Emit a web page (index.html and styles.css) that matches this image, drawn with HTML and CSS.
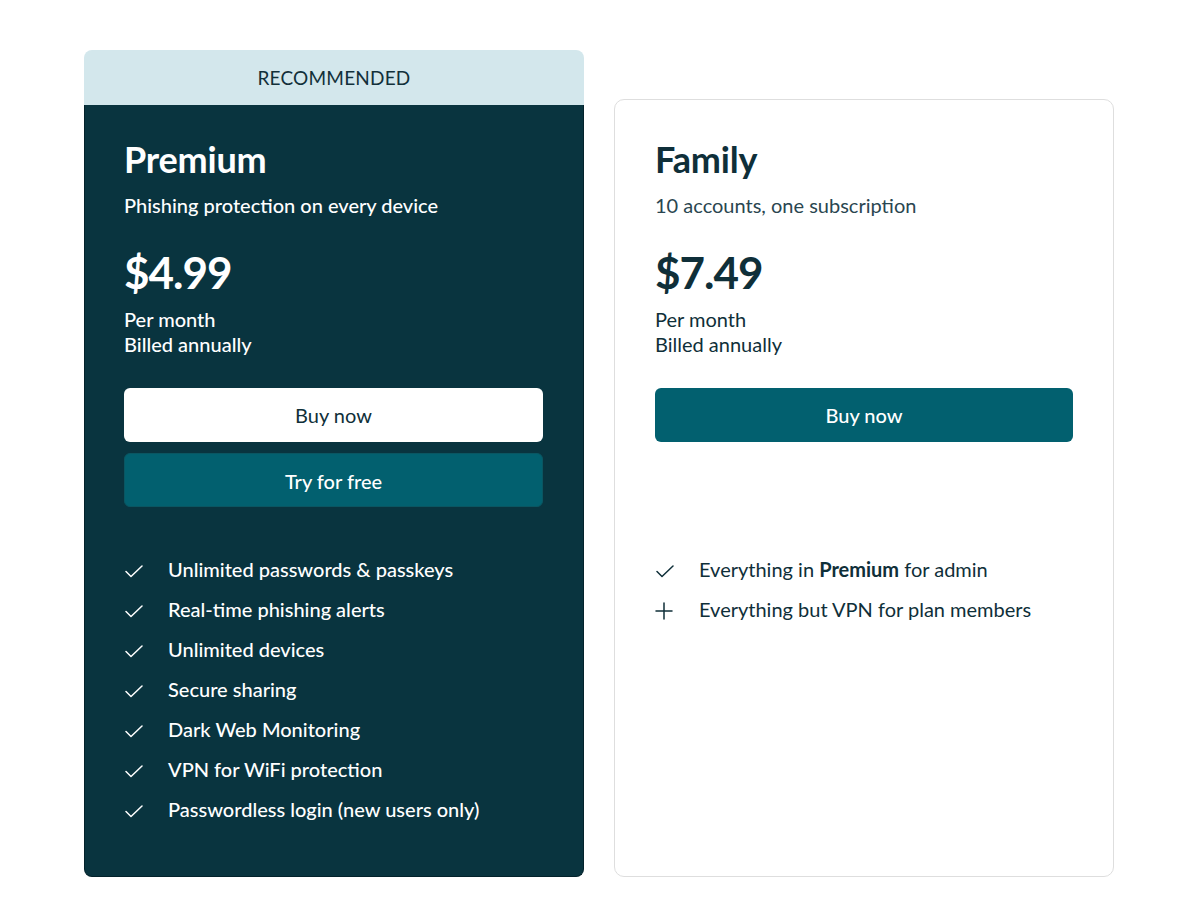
FILE: index.html
```html
<!DOCTYPE html>
<html>
<head>
    <meta charset="utf-8">
    <title>Plans</title>
    <link rel="stylesheet" href="styles.css">
</head>
<body>
<div id="plans">
    <div class="plan featured">
        <div class="ribbon">RECOMMENDED</div>
        <div class="plan-body">
            <h2 class="name">Premium</h2>
            <p class="tagline">Phishing protection on every device</p>
            <div class="price">$4.99</div>
            <p class="billing">Per month<br>Billed annually</p>
            <div class="actions">
                <a href="#" class="btn btn-light">Buy now</a>
                <a href="#" class="btn btn-teal">Try for free</a>
            </div>
            <ul class="features">
                <li><svg class="icon" viewBox="0 0 18 13"><polyline points="1,6.5 6,11.5 17,1"/></svg><span>Unlimited passwords &amp; passkeys</span></li>
                <li><svg class="icon" viewBox="0 0 18 13"><polyline points="1,6.5 6,11.5 17,1"/></svg><span>Real-time phishing alerts</span></li>
                <li><svg class="icon" viewBox="0 0 18 13"><polyline points="1,6.5 6,11.5 17,1"/></svg><span>Unlimited devices</span></li>
                <li><svg class="icon" viewBox="0 0 18 13"><polyline points="1,6.5 6,11.5 17,1"/></svg><span>Secure sharing</span></li>
                <li><svg class="icon" viewBox="0 0 18 13"><polyline points="1,6.5 6,11.5 17,1"/></svg><span>Dark Web Monitoring</span></li>
                <li><svg class="icon" viewBox="0 0 18 13"><polyline points="1,6.5 6,11.5 17,1"/></svg><span>VPN for WiFi protection</span></li>
                <li><svg class="icon" viewBox="0 0 18 13"><polyline points="1,6.5 6,11.5 17,1"/></svg><span>Passwordless login (new users only)</span></li>
            </ul>
        </div>
    </div>

    <div class="plan plain">
        <h2 class="name">Family</h2>
        <p class="tagline">10 accounts, one subscription</p>
        <div class="price">$7.49</div>
        <p class="billing">Per month<br>Billed annually</p>
        <div class="actions">
            <a href="#" class="btn btn-teal">Buy now</a>
        </div>
        <ul class="features">
            <li><svg class="icon" viewBox="0 0 18 13"><polyline points="1,6.5 6,11.5 17,1"/></svg><span>Everything in <b>Premium</b> for admin</span></li>
            <li><svg class="icon plus" viewBox="0 0 18 18"><path d="M9 1v16M1 9h16"/></svg><span>Everything but VPN for plan members</span></li>
        </ul>
    </div>
</div>
</body>
</html>
```

FILE: styles.css
```css
* {
    margin: 0;
    padding: 0;
    box-sizing: border-box;
}

body {
    background: #fff;
    font-family: Lato, "Open Sans", Arial, sans-serif;
    color: #0f2f39;
}

ul {
    list-style: none;
}

a {
    text-decoration: none;
}

div#plans {
    display: flex;
    gap: 30px;
    padding: 50px 0 0 84px;
}

div.plan {
    width: 500px;
}

/* recommended plan */

div.featured {
    display: flex;
    flex-direction: column;
}

div.ribbon {
    height: 55px;
    line-height: 55px;
    text-align: center;
    font-size: 19px;
    letter-spacing: 0.2px;
    color: #12303a;
    background: #d3e7ec;
    border-radius: 8px 8px 0 0;
}

div.plan-body {
    flex: 1;
    padding: 34px 40px 55px 39px;
    background: #09343f;
    border: 1px solid #03222b;
    border-top: none;
    border-radius: 0 0 8px 8px;
    color: #fff;
}

div.featured .tagline,
div.featured .billing,
div.featured .features li {
    font-weight: 500;
}

/* plain plan */

div.plain {
    margin-top: 49px;
    padding: 39px 40px 55px;
    border: 1px solid #dedede;
    border-radius: 10px;
}

div.plain .tagline {
    color: #2a4650;
}

/* shared pieces */

h2.name {
    font-size: 36px;
    line-height: 40px;
    font-weight: 700;
    letter-spacing: -0.2px;
}

p.tagline {
    margin-top: 12px;
    font-size: 20px;
    line-height: 28px;
}

div.price {
    margin-top: 27px;
    font-size: 44px;
    line-height: 52px;
    font-weight: 700;
    letter-spacing: -1px;
}

p.billing {
    margin-top: 9px;
    font-size: 20px;
    line-height: 25px;
}

div.actions {
    display: flex;
    flex-direction: column;
    gap: 11px;
    min-height: 119px;
    margin-top: 31px;
}

a.btn {
    display: block;
    height: 54px;
    line-height: 54px;
    text-align: center;
    font-size: 20px;
    border-radius: 6px;
}

a.btn-light {
    background: #fff;
    color: #0f2f39;
}

a.btn-teal {
    background: #02606f;
    color: #fff;
    font-weight: 500;
}

div.featured a.btn-teal {
    border: 1px solid #0a5662;
}

ul.features {
    display: flex;
    flex-direction: column;
    gap: 16px;
    margin-top: 50px;
}

ul.features li {
    display: flex;
    align-items: center;
    font-size: 20px;
    line-height: 24px;
}

ul.features b {
    font-weight: 700;
}

svg.icon {
    width: 18px;
    height: 13px;
    margin: 4px 25px 0 1px;
    fill: none;
    stroke: currentColor;
    stroke-width: 1.5;
    stroke-linecap: round;
    stroke-linejoin: round;
    flex-shrink: 0;
}

svg.plus {
    height: 18px;
    margin: 4px 26px 0 0;
}
```
